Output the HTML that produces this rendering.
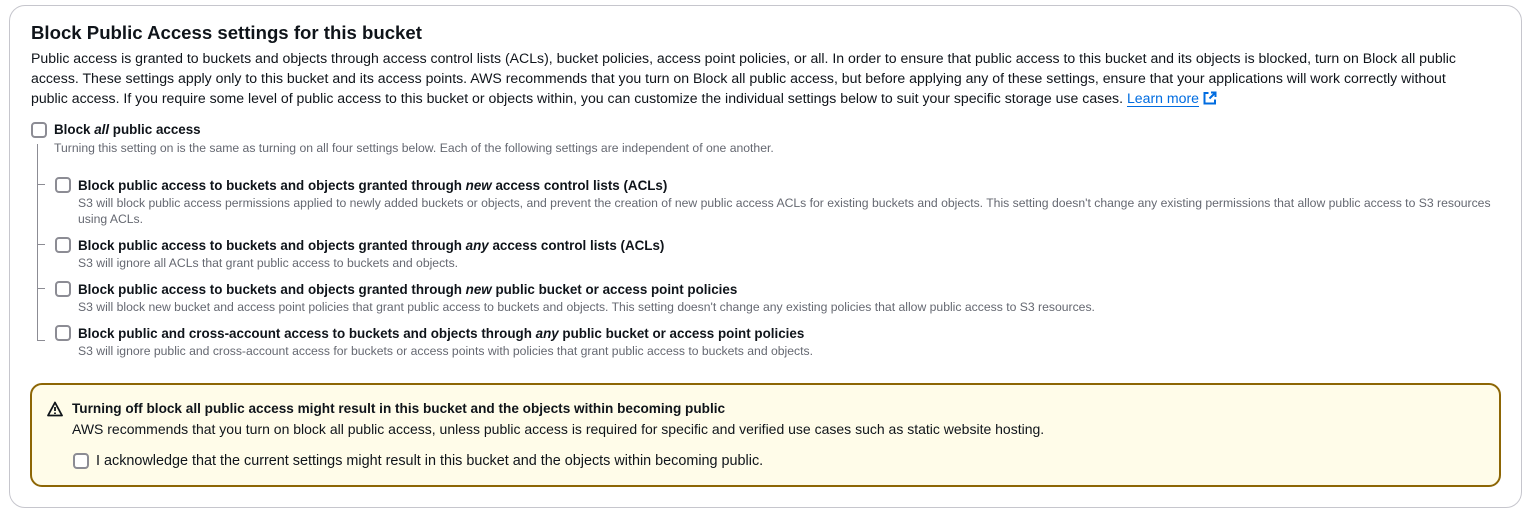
<!DOCTYPE html><html><head><style>
body{margin:0;background:#fff;font-family:"Liberation Sans",sans-serif;color:#0f141a;}
.card{position:absolute;left:9px;top:5px;width:1513px;height:503px;border:1px solid #c6c6cd;border-radius:16px;box-sizing:border-box}
.a{position:absolute;white-space:nowrap}
.t{font-size:18.6px;font-weight:bold;left:31px;top:22px}
.p{font-size:14.1px;left:31px;line-height:20px}
.cb{position:absolute;width:12px;height:12px;border:2px solid #8c8c94;border-radius:4px;background:#fff}
.lb{font-size:13.4px;font-weight:bold}
.d{font-size:12.2px;color:#656871}
.line{position:absolute;background:#8c8c94}
</style></head><body>
<div class="card"></div>
<div class="a t">Block Public Access settings for this bucket</div>
<div class="a p" style="top:48px">Public access is granted to buckets and objects through access control lists (ACLs), bucket policies, access point policies, or all. In order to ensure that public access to this bucket and its objects is blocked, turn on Block all public</div>
<div class="a p" style="top:68px">access. These settings apply only to this bucket and its access points. AWS recommends that you turn on Block all public access, but before applying any of these settings, ensure that your applications will work correctly without</div>
<div class="a p" style="top:88px">public access. If you require some level of public access to this bucket or objects within, you can customize the individual settings below to suit your specific storage use cases. <span style="color:#006ce0;border-bottom:1px solid #006ce0">Learn more</span> <svg width="14" height="14" viewBox="0 0 14 14" style="vertical-align:-2px"><path d="M8 1.5h4.5V6M12.5 1.5L6.5 7.5M5.5 2H1.5v10.5H12V8.5" fill="none" stroke="#006ce0" stroke-width="2"/></svg></div>

<div class="cb" style="left:31px;top:122px"></div>
<div class="a lb" style="left:54px;top:122px">Block <i>all</i> public access</div>
<div class="a d" style="left:54px;top:141px">Turning this setting on is the same as turning on all four settings below. Each of the following settings are independent of one another.</div>
<div class="line" style="left:37px;top:144px;width:1px;height:197px"></div>
<div class="line" style="left:37px;top:184px;width:8px;height:1px"></div>
<div class="line" style="left:37px;top:244px;width:8px;height:1px"></div>
<div class="line" style="left:37px;top:288px;width:8px;height:1px"></div>
<div class="line" style="left:37px;top:340px;width:8px;height:1px"></div>

<div class="cb" style="left:55px;top:177px"></div>
<div class="a lb" style="left:78px;top:178px">Block public access to buckets and objects granted through <i>new</i> access control lists (ACLs)</div>
<div class="a d" style="left:78px;top:195px;line-height:16px">S3 will block public access permissions applied to newly added buckets or objects, and prevent the creation of new public access ACLs for existing buckets and objects. This setting doesn't change any existing permissions that allow public access to S3 resources<br>using ACLs.</div>

<div class="cb" style="left:55px;top:237px"></div>
<div class="a lb" style="left:78px;top:238px">Block public access to buckets and objects granted through <i>any</i> access control lists (ACLs)</div>
<div class="a d" style="left:78px;top:256px">S3 will ignore all ACLs that grant public access to buckets and objects.</div>

<div class="cb" style="left:55px;top:281px"></div>
<div class="a lb" style="left:78px;top:282px">Block public access to buckets and objects granted through <i>new</i> public bucket or access point policies</div>
<div class="a d" style="left:78px;top:300px">S3 will block new bucket and access point policies that grant public access to buckets and objects. This setting doesn't change any existing policies that allow public access to S3 resources.</div>

<div class="cb" style="left:55px;top:325px"></div>
<div class="a lb" style="left:78px;top:326px">Block public and cross-account access to buckets and objects through <i>any</i> public bucket or access point policies</div>
<div class="a d" style="left:78px;top:344px">S3 will ignore public and cross-account access for buckets or access points with policies that grant public access to buckets and objects.</div>

<div style="position:absolute;left:30px;top:383px;width:1471px;height:104px;box-sizing:border-box;border:2px solid #8d6605;border-radius:12px;background:#fffce9"></div>
<svg class="a" style="left:47px;top:401px" width="16" height="16" viewBox="0 0 16 16"><path d="M8 1.5L15 14.5H1Z" fill="none" stroke="#0f141a" stroke-width="1.8" stroke-linejoin="round"/><path d="M8 6v4M8 11.5v1.5" stroke="#0f141a" stroke-width="1.8"/></svg>
<div class="a lb" style="left:72px;top:401px;font-size:13.6px">Turning off block all public access might result in this bucket and the objects within becoming public</div>
<div class="a" style="left:72px;top:421px;font-size:14px">AWS recommends that you turn on block all public access, unless public access is required for specific and verified use cases such as static website hosting.</div>
<div class="cb" style="left:73px;top:453px"></div>
<div class="a" style="left:96px;top:453px;font-size:14.4px">I acknowledge that the current settings might result in this bucket and the objects within becoming public.</div>
</body></html>
